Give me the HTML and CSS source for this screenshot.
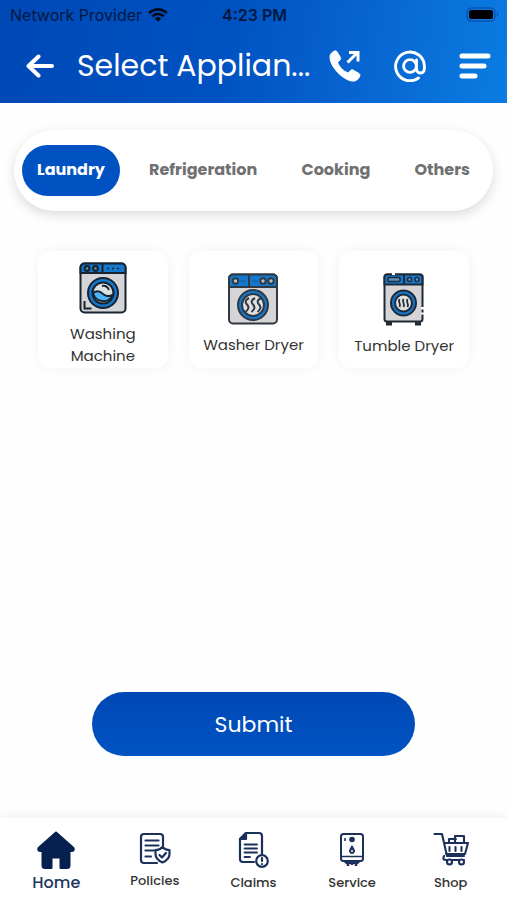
FILE: index.html
```html
<!DOCTYPE html>
<html lang="en">
<head>
<meta charset="utf-8">
<meta name="viewport" content="width=device-width, initial-scale=1">
<title>Select Appliance</title>
<link rel="stylesheet" href="styles.css">
</head>
<body>
<header class="header">
  <div class="status">
    <div class="carrier">
      <span>Network Provider</span>
      <svg width="20" height="14" viewBox="0 0 20 14" fill="none" stroke="#020b20" stroke-width="2.7"><path d="M1 5Q10-2.200 19 5M4.200 8.200Q10 3.400 15.800 8.200"/><path d="M6.800 10.400Q10 7.800 13.200 10.400L10 13.800Z" fill="#020b20" stroke="none"/></svg>
    </div>
    <span class="time">4:23 PM</span>
    <svg class="battery" width="33" height="16" viewBox="0 0 33 16"><rect x="1" y="1" width="28" height="13" rx="4" fill="none" stroke="#07459a"/><rect x="3" y="3" width="24" height="9" rx="2.500" fill="#000"/><path d="M31 5.500q2 2 0 4z" fill="#07459a"/></svg>
  </div>
  <div class="titlebar">
    <button class="icon-button" aria-label="Back"><svg width="28" height="24" viewBox="0 0 28 24" fill="none" stroke="#fff" stroke-width="4" stroke-linecap="round" stroke-linejoin="round"><path d="M26 12H3M12.500 2.500L2.500 12L12.500 21.500"/></svg></button>
    <h1 class="title">Select Applian...</h1>
    <div class="actions">
      <button class="icon-button" aria-label="Call"><svg width="32" height="32" viewBox="0 0 32 32"><path fill="#fff" stroke="#fff" stroke-linejoin="round" d="M1.200 5.500C1.800 3.200 4 1.600 5.600 1c1-.4 2 0 2.500.9l3.200 5.400c.6 1 .4 2-.4 2.800L8.600 12.400c1.700 4.700 5.500 8.600 10.600 10.700l2.300-2.500c.8-.8 1.900-1 2.900-.4l5.300 3.100c1.100.7 1.500 1.600 1.100 2.700-.8 2.200-2.500 4.300-5.300 5C16 32.500-.8 16 1.200 5.500Z"/><path d="M18.500 12.500L28.500 2.500M20 2.500H29V11.500" fill="none" stroke="#fff" stroke-width="3"/></svg></button>
      <button class="icon-button" aria-label="Email"><svg width="32" height="32" viewBox="0 0 32 32" fill="none" stroke="#fff" stroke-width="2.900" stroke-linecap="round"><path d="M24.500 28A14.400 14.400 0 1 1 30.400 16V18.500C30.400 24.500 22.500 24.500 22.500 18.500V10"/><circle cx="16" cy="16" r="6.400"/></svg></button>
      <button class="icon-button" aria-label="Menu"><svg width="32" height="28" viewBox="0 0 32 28" stroke="#fff" stroke-width="5" stroke-linecap="round"><path d="M3 4H29M3 14H25M3 24H16"/></svg></button>
    </div>
  </div>
</header>

<main class="main">
  <nav class="tabs" aria-label="Appliance category">
    <button class="tab tab-active">Laundry</button>
    <button class="tab">Refrigeration</button>
    <button class="tab">Cooking</button>
    <button class="tab">Others</button>
  </nav>

  <section class="cards">
    <button class="card">
      <svg width="48" height="52" viewBox="0 0 48 52" stroke="#182330" stroke-width="2"><rect x="1.500" y="1.500" width="45" height="49" rx="4" fill="#d5d5d7"/><path d="M1.500 11V5.500a4 4 0 0 1 4-4h37a4 4 0 0 1 4 4V11Z" fill="#1478ce"/><path d="M23.500 1.500V11"/><g fill="#63808f"><circle cx="8" cy="6.500" r="2.400"/><circle cx="16.500" cy="6.500" r="2.400"/></g><path d="M28 6.500h2M33 6.500h2M38 6.500h2" stroke-width="1.500"/><circle cx="24" cy="31" r="15" fill="#1478ce"/><circle cx="24" cy="31" r="10.500" fill="#dfe2e4"/><path d="M14 31Q19 27 24 32Q29 36 34 32.500A10.500 10.500 0 0 1 14 31Z" fill="#4cb5fa"/><path d="M23 24q5-1 7 4M5.500 39v7.500h7" fill="none"/></svg>
      <span>Washing Machine</span>
    </button>
    <button class="card">
      <svg width="50" height="52" viewBox="0 0 50 52" stroke="#303941" stroke-width="2"><rect x="1" y="1.500" width="48" height="49" rx="4" fill="#d5d5d7"/><path d="M1 14V5.500a4 4 0 0 1 4-4h40a4 4 0 0 1 4 4V14Z" fill="#1478ce"/><path d="M21 1.500V14"/><g fill="#b4c1c9"><circle cx="7.500" cy="8" r="2.700"/><circle cx="35" cy="8" r="2.700"/><circle cx="43" cy="8" r="2.700"/></g><path d="M12 8h6M24 8h6" stroke-width="1" stroke="#17568f"/><circle cx="25" cy="32" r="15" fill="#1478ce"/><circle cx="25" cy="32" r="11" fill="#dedfe1"/><path d="M21 25q-5.500 3-2 6.500t-1.500 7.500M27 25q-5.500 3-2 6.500t-1.500 7.500M33 25q-5.500 3-2 6.500t-1.500 7.500" fill="none"/></svg>
      <span>Washer Dryer</span>
    </button>
    <button class="card">
      <svg width="42" height="53" viewBox="0 0 42 53" stroke="#202a35" stroke-width="2"><path d="M4 48v3.500h4V48M33 48v3.500h4V48" fill="#34383d"/><rect x="1.500" y="1.500" width="38" height="47" rx="2.500" fill="#d5d5d7"/><path d="M1.500 11.500V4a2.500 2.500 0 0 1 2.500-2.500h33A2.500 2.500 0 0 1 39.500 4v7.500Z" fill="#1478ce"/><path d="M21 1.500v10"/><rect x="5" y="4.500" width="12" height="4" rx="1" fill="#5f91b5" stroke-width="1.500"/><g fill="#639ccc" stroke-width="1.500"><circle cx="26.500" cy="6.500" r="2"/><circle cx="34" cy="6.500" r="2"/></g><circle cx="20.500" cy="30" r="12.500" fill="#1478ce"/><circle cx="20.500" cy="30" r="8.500" fill="#dedfe1"/><path d="M16.500 26q-1 2 0 4t0 4M20.500 26q-1 2 0 4t0 4M24.500 26q-1 2 0 4t0 4" fill="none" stroke-width="1.700"/><path d="M39.500 34v2.500M39.500 39.500v2" stroke="#fff" stroke-width="3"/><path d="M9 1h3" stroke="#fff"/></svg>
      <span>Tumble Dryer</span>
    </button>
  </section>

  <button class="submit">Submit</button>
</main>

<nav class="bottom-nav" aria-label="Main">
  <a class="nav-item nav-home" href="#">
    <svg width="38" height="38" viewBox="0 0 38 38"><path fill="#06204f" stroke="#06204f" stroke-width="2" stroke-linejoin="round" d="M19 1.500L1.500 17Q.5 20 3.500 20H5.500V34.500Q5.500 37 8 37H14.500V26.500H23.500V37H30Q32.500 37 32.500 34.500V20H34.500Q37.500 20 36.500 17Z"/></svg>
    <span>Home</span>
  </a>
  <a class="nav-item nav-policies" href="#">
    <svg width="32" height="34" viewBox="0 0 32 34" fill="none" stroke="#1b315c" stroke-width="2.200" stroke-linecap="round" stroke-linejoin="round"><path d="M18 32H5Q2 32 2 29V6Q2 3 5 3H21Q24 3 24 6V15"/><path d="M6.500 9.500H19.500M6.500 14.500H19.500M6.500 19.500H15M6.500 25.500H12"/><path d="M23.500 16Q26 19 30.500 19V23Q30.500 28.500 23.500 31.500Q16.500 28.500 16.500 23V19Q21 19 23.500 16Z" fill="#fff"/><path d="M20.500 24l2.500 2.500 4-4.500"/></svg>
    <span>Policies</span>
  </a>
  <a class="nav-item" href="#">
    <svg width="32" height="38" viewBox="0 0 32 38" fill="none" stroke="#1b315c" stroke-width="2.200" stroke-linecap="round" stroke-linejoin="round"><path d="M17 31H6Q3 31 3 28V8L9 2H22Q25 2 25 5V24"/><path d="M3 8H9V2Z" fill="#1b315c"/><path d="M7.500 13.500H20M7.500 17.500H20M7.500 21.500H20M7.500 26H13" stroke-width="1.800"/><circle cx="25" cy="30" r="5.800" fill="#fff"/><path d="M25 27v3M25 33v.1"/></svg>
    <span>Claims</span>
  </a>
  <a class="nav-item" href="#">
    <svg width="26" height="38" viewBox="0 0 26 38" fill="none" stroke="#1b315c" stroke-width="2"><rect x="2" y="3" width="22" height="27" rx="2.500"/><path d="M2 25.500h22M6 7v3" stroke-width="1.600"/><circle cx="13" cy="8.500" r="2.800" fill="#1b315c" stroke="none"/><path d="M13 14Q9.500 19 10 20.500Q11 23 13 23T16 20.500Q16.500 19 13 14Z" fill="#1b315c" stroke="none"/><circle cx="13" cy="20" r="1" fill="#fff" stroke="none"/><path d="M4 30l3 3h12l3-3Z" fill="#1b315c" stroke="none"/><path d="M9 31v4M13 31v3M17 31v4" stroke-width="2.500"/></svg>
    <span>Service</span>
  </a>
  <a class="nav-item" href="#">
    <svg width="36" height="36" viewBox="0 0 36 36" fill="none" stroke="#1b315c" stroke-width="2.100" stroke-linecap="round" stroke-linejoin="round"><path d="M1.500 3H9L14 25H31M11 12H35L32 23H13M11 25q-2 4 2 4H31"/><path d="M16 12V8h7M22 12V5h9v7M16.500 16v4M22.500 16v4M28.500 16v4"/><g fill="#fff"><circle cx="16.500" cy="31" r="2.500"/><circle cx="28.500" cy="31" r="2.500"/></g></svg>
    <span>Shop</span>
  </a>
</nav>
</body>
</html>
```
FILE: styles.css
```css
* {
  box-sizing: border-box;
}

body {
  margin: 0;
  min-height: 100vh;
  display: flex;
  flex-direction: column;
  background: #fefefe;
  font-family: Poppins, Inter, sans-serif;
  color: #333;
}

button {
  margin: 0;
  padding: 0;
  border: 0;
  background: none;
  font: inherit;
  color: inherit;
  cursor: pointer;
}

svg {
  display: block;
  flex: none;
}

.header {
  height: 103px;
  background: linear-gradient(100deg, #0048b6 0%, #0052c2 45%, #0868d4 75%, #0a7ce2 100%);
}

.status {
  height: 30px;
  padding: 0 8px 0 10px;
  display: grid;
  grid-template-columns: 1fr auto 1fr;
  align-items: center;
  font-family: Inter, sans-serif;
  font-size: 16px;
  color: #03183f;
}

.carrier {
  display: flex;
  align-items: center;
  gap: 6px;
}

.time {
  font-weight: 600;
}

.battery {
  justify-self: end;
}

.titlebar {
  height: 72px;
  padding: 0 16px 0 26px;
  display: flex;
  align-items: center;
}

.title {
  margin: 0 0 0 23px;
  flex: 1;
  font-size: 30px;
  font-weight: 400;
  line-height: 40px;
  white-space: nowrap;
  color: #fff;
}

.actions {
  display: flex;
  align-items: center;
  gap: 33px;
}

.main {
  flex: 1;
  display: flex;
  flex-direction: column;
  padding-bottom: 62px;
}

.tabs {
  margin: 27px 14px 0;
  padding: 15px 8px;
  display: flex;
  justify-content: space-between;
  border-radius: 41px;
  background: #fff;
  box-shadow: 0 4px 12px rgba(0, 0, 0, 0.14);
}

.tab {
  height: 51px;
  padding: 0 15px 2px;
  border-radius: 26px;
  font-size: 16px;
  font-weight: 700;
  color: #707070;
}

.tab-active {
  background: #0052c2;
  color: #fff;
}

.cards {
  margin: 40px 38px 0;
  display: grid;
  grid-template-columns: repeat(3, 1fr);
  gap: 21px;
}

.card {
  height: 117px;
  padding: 10px 8px 0;
  display: flex;
  flex-direction: column;
  align-items: center;
  justify-content: center;
  gap: 9px;
  border-radius: 12px;
  background: #fff;
  box-shadow: 0 0 12px rgba(0, 0, 0, 0.05);
  font-size: 15px;
  line-height: 22px;
}

.submit {
  height: 64px;
  margin: auto 92px 0;
  border-radius: 32px;
  background: linear-gradient(#0048b4, #0053c3);
  font-size: 22px;
  color: #fff;
}

.bottom-nav {
  height: 82px;
  padding: 0 7px;
  display: grid;
  grid-template-columns: repeat(5, 1fr);
  background: #fff;
  box-shadow: 0 -3px 8px rgba(0, 0, 0, 0.05);
}

.nav-item {
  padding: 13px 0 7px;
  display: flex;
  flex-direction: column;
  align-items: center;
  justify-content: space-between;
  font-size: 13px;
  font-weight: 500;
  line-height: 20px;
  color: #333;
  text-decoration: none;
}

.nav-policies {
  padding-bottom: 9px;
}

.nav-home {
  font-size: 16px;
  color: #20365f;
}
```
